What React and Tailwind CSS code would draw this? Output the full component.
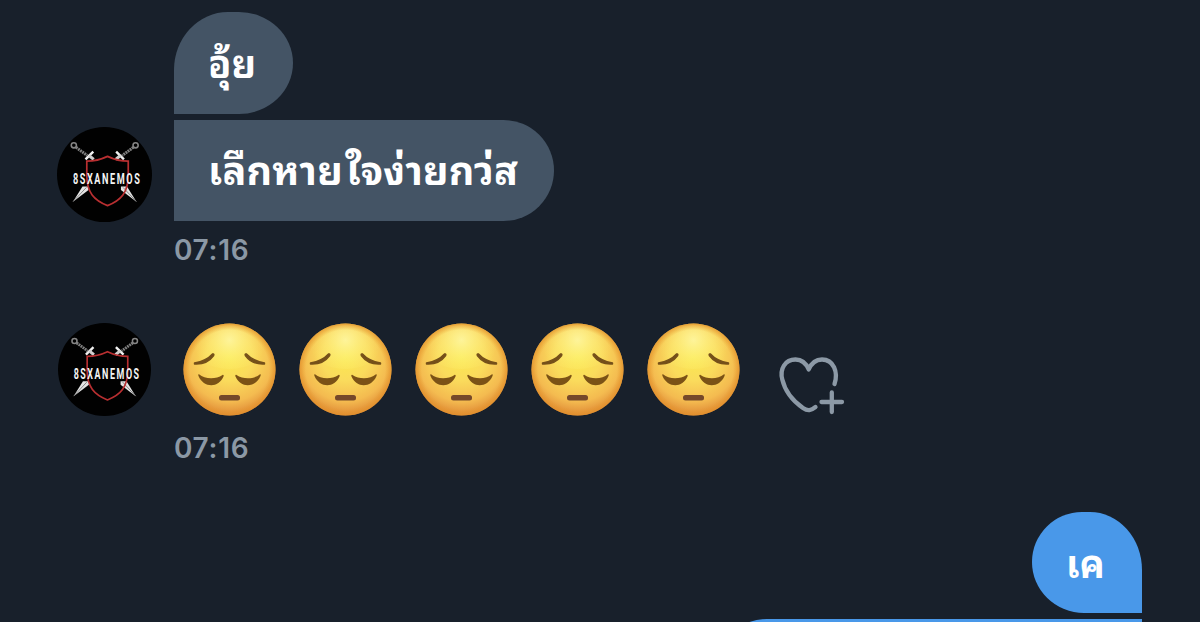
import React from 'react';

const thai = 'font-["Noto_Sans_Thai_Looped","Noto_Looped_Thai","Loma","Garuda","Waree","Noto_Sans_Thai","Noto_Sans",sans-serif] font-bold text-white whitespace-nowrap';

function Sword() {
  return (
    <g>
      {/* pommel, grip and guard */}
      <circle cx="19.5" cy="21.2" r="3" fill="none" stroke="#858585" strokeWidth="1.8" />
      <path d="M22 23.5L35 33" stroke="#808080" strokeWidth="3.4" strokeDasharray="2.2 .8" />
      <path d="M33 37.5L42 28.5" stroke="#f1f1f1" strokeWidth="2.8" />
      <path d="M37 33L42.5 37.5" stroke="#cfcfcf" strokeWidth="3.6" />
      {/* blade tip of the opposite sword */}
      <path d="M18.5 86.5L29.5 69L36.5 69L36.5 73Z" fill="#e4e4e4" />
      <path d="M18.5 86.5L34 70" stroke="#777" strokeWidth="1" />
    </g>
  );
}

function Avatar({ className }) {
  return (
    <svg viewBox="0 0 110 110" className={className}>
      <circle cx="55" cy="55" r="55" fill="#010101" />
      <Sword />
      <g transform="matrix(-1 0 0 1 110.5 0)">
        <Sword />
      </g>
      <path
        d="M58.5 34Q47 39.5 34.5 39.5L34.5 56C34.5 76 43 85 58.5 91C74 85 82.5 76 82.5 56L82.5 39.5Q70 39.5 58.5 34Z"
        fill="none"
        stroke="#b82f31"
        strokeWidth="2"
      />
      <text
        transform="translate(18.5 66.5) scale(.64 1)"
        x="0"
        y="0"
        textLength="121"
        lengthAdjust="spacing"
        fill="#f4f4f4"
        className='font-["Roboto","Liberation_Sans",sans-serif] text-[16.5px] font-bold'
      >
        8SXANEMOS
      </text>
    </svg>
  );
}

function Pensive() {
  return (
    <svg viewBox="0 0 93 93" className="size-[93px] shrink-0">
      <defs>
        <radialGradient id="face" cx="46.5" cy="34" r="59" gradientUnits="userSpaceOnUse">
          <stop offset="0" stopColor="#fbe950" />
          <stop offset=".4" stopColor="#fadb5c" />
          <stop offset=".75" stopColor="#f4bb50" />
          <stop offset="1" stopColor="#de8735" />
        </radialGradient>
        <radialGradient id="shine" cx="46.5" cy="17" r="36" gradientUnits="userSpaceOnUse">
          <stop offset="0" stopColor="#fffbb0" stopOpacity=".75" />
          <stop offset="1" stopColor="#fff37a" stopOpacity="0" />
        </radialGradient>
        <radialGradient id="rim">
          <stop offset=".86" stopColor="#e79b2b" stopOpacity="0" />
          <stop offset="1" stopColor="#e2912b" stopOpacity=".75" />
        </radialGradient>
      </defs>
      <circle cx="46.5" cy="46.5" r="46" fill="url(#face)" />
      <ellipse cx="46.5" cy="24" rx="36" ry="22" fill="url(#shine)" />
      <circle cx="46.5" cy="46.5" r="46" fill="url(#rim)" />
      <g fill="#75501a" stroke="#75501a" strokeWidth="1.4" strokeLinejoin="round">
        <path d="M11.5 40C19.500 38.500 25.500 35.500 29.500 31C31 30.500 31.200 31.500 30.500 32.800C26 39 19.500 41.500 11.500 41Z" />
        <path d="M81.5 40C73.500 38.500 67.500 35.500 63.500 31C62 30.500 61.800 31.500 62.500 32.800C67 39 73.500 41.500 81.500 41Z" />
      </g>
      <rect x="36" y="72" width="21" height="5.5" rx="2.5" fill="#75482a" />
      <g fill="#7b5216">
        <path d="M16 51.3C22 56.5 33 56.5 39.5 52C40.5 51.5 41 52.5 40.5 53.5C35.5 65.5 20.5 65 15.5 53C15 51.5 15.3 50.8 16 51.3Z" />
        <path d="M77 51.3C71 56.5 60 56.5 53.5 52C52.5 51.5 52 52.5 52.5 53.5C57.5 65.5 72.5 65 77.5 53C78 51.5 77.7 50.8 77 51.3Z" />
      </g>
    </svg>
  );
}

function HeartPlus() {
  return (
    <svg
      viewBox="0 0 70 62"
      className="ml-[37px] mt-[31px] h-[62px] w-[70px]"
      fill="none"
      stroke="#8c99a6"
      strokeWidth="4.3"
      strokeLinecap="round"
      strokeLinejoin="round"
    >
      <path d="M57.500 30C61.500 18 56.500 5.500 45 5.500C38 5.500 34.500 9 31.700 15.500C29 9 25.500 5.500 18.500 5.500C8 5.500 2.500 15 5.300 25.500C8 37 16 47 26 54C31 57.500 34 56.500 38.500 53" />
      <path d="M54.8 38.5V58M44.500 48H65" />
    </svg>
  );
}

function Time({ className }) {
  return (
    <div className={`ml-[174px] h-8 font-["Inter",sans-serif] text-[28px] leading-8 font-semibold tracking-[.7px] text-[#8b98a5] ${className}`}>
      07:16
    </div>
  );
}

export default function App() {
  return (
    <main className="flex h-[622px] w-[1200px] flex-col overflow-hidden bg-[#18202b] pt-3">
      <div className="ml-[174px] flex h-[102px] w-[119px] shrink-0 items-center rounded-[54px_54px_54px_0/58px_51px_51px_0] bg-[#445465] pb-[5px] pl-[34px]">
        <span className={`${thai} text-[38px]`}>อุ้ย</span>
      </div>

      <div className="mt-1.5 flex shrink-0 pl-[57px]">
        <Avatar className="mt-[7px] size-[95px]" />
        <div className="ml-[22px] flex h-[101px] w-[380px] items-center rounded-r-[51px] bg-[#445465] pb-[5px] pl-[34px]">
          <span className={`${thai} text-[39.5px] tracking-[.2px] [word-spacing:-8px]`}>เลืกหาย ใจง่ายกว่ส</span>
        </div>
      </div>
      <Time className="mt-3" />

      <div className="mt-[57px] flex shrink-0 pl-[58px]">
        <Avatar className="size-[93px]" />
        <div className="ml-8 flex gap-[23px]">
          <Pensive />
          <Pensive />
          <Pensive />
          <Pensive />
          <Pensive />
        </div>
        <HeartPlus />
      </div>
      <Time className="mt-4" />

      <div className="mt-12 mr-[58px] flex shrink-0 flex-col items-end gap-1.5">
        <div className="flex h-[101px] w-[110px] items-center rounded-[50px_52px_0_52px/50px_58px_0_51px] bg-[#4998e9] pb-[3px] pl-[34px]">
          <span className={`${thai} text-[37.5px]`}>เค</span>
        </div>
        <div className="h-[101px] w-[426px] rounded-l-[51px] bg-[#4998e9]" />
      </div>
    </main>
  );
}
